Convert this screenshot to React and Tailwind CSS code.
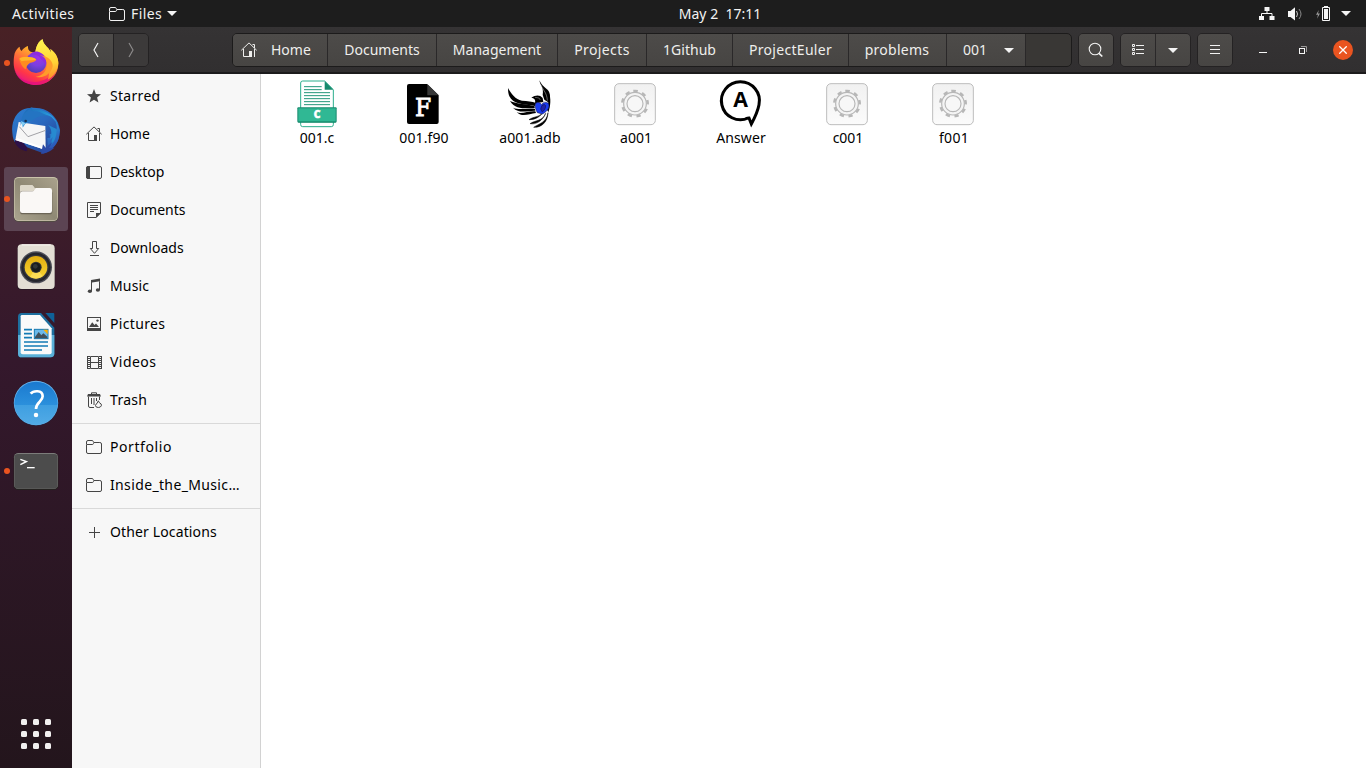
import React from "react";

const DOCK_BOX = "size-12 block overflow-visible";

function Firefox() {
  return (
    <svg className={DOCK_BOX} viewBox="36 117 144 144">
      <defs>
        <linearGradient id="ffBody" x1="0.8" y1="0.05" x2="0.3" y2="1">
          <stop offset="0" stopColor="#fff44f" />
          <stop offset="0.3" stopColor="#ffb52a" />
          <stop offset="0.55" stopColor="#ff7139" />
          <stop offset="0.8" stopColor="#ff3647" />
          <stop offset="1" stopColor="#e31587" />
        </linearGradient>
        <radialGradient id="ffGlobe" cx="0.6" cy="0.25" r="0.8">
          <stop offset="0" stopColor="#a030e8" />
          <stop offset="0.5" stopColor="#7b3fe0" />
          <stop offset="1" stopColor="#4b3cae" />
        </radialGradient>
        <linearGradient id="ffTail" x1="0.5" y1="0" x2="0.6" y2="1">
          <stop offset="0" stopColor="#fff44f" />
          <stop offset="0.6" stopColor="#ffd336" />
          <stop offset="1" stopColor="#ff8a2a" />
        </linearGradient>
      </defs>
      <path d="M44 160 C48 150 53 143 59 140 C59 146 61 150 65 153 C69 146 76 141 84 138 C83 146 86 152 92 155 L106 158 C108 138 116 124 128 118 C129 130 137 137 146 146 C149 150 151 154 153 158 C153 153 152 149 151 147 C165 157 175 171 175 190 C175 228 144 255 108 255 C70 255 41 227 41 189 C41 178 42 169 44 160Z" fill="url(#ffBody)" />
      <path d="M43 207 C53 238 84 250 114 245 C142 240 162 223 171 201 C167 234 140 255 108 255 C75 255 49 235 43 207Z" fill="#e20d82" opacity="0.7" />
      <path d="M106 158 C108 138 116 124 128 118 C129 130 137 137 146 146 C149 150 151 154 153 158 L151 147 C166 158 175 172 175 190 C173 213 161 231 143 239 C151 220 151 187 137 170 C129 161 118 155 106 158Z" fill="url(#ffTail)" />
      <circle cx="108" cy="188" r="31" fill="url(#ffGlobe)" />
      <path d="M88 165 C97 153 112 151 124 160 C137 168 142 183 138 199 C133 182 122 179 119 171 C112 164 99 161 88 165Z" fill="#8d2ce0" />
      <path d="M119 165 C136 168 146 190 138 207 C134 220 121 229 107 230 C130 237 154 222 158 199 C159 184 146 169 119 165Z" fill="#ff9c2b" />
      <path d="M57 176 C67 167 83 171 91 172 C98 172 106 175 109 180 C104 186 96 187 91 188 C84 193 78 199 78 208 C65 201 61 187 57 176Z" fill="#ff8b20" />
      <path d="M58 176 C67 169 82 171 91 172 C99 172 106 175 109 179 C91 181 76 181 65 184Z" fill="#ffb52a" />
    </svg>
  );
}

function Thunderbird() {
  return (
    <svg className={DOCK_BOX} viewBox="36 321 144 144">
      <defs>
        <linearGradient id="tbBody" x1="0" y1="0" x2="0.8" y2="1">
          <stop offset="0" stopColor="#2b7ed0" />
          <stop offset="0.5" stopColor="#2a69bf" />
          <stop offset="1" stopColor="#233f93" />
        </linearGradient>
        <linearGradient id="tbWing" x1="0" y1="0" x2="0.4" y2="1">
          <stop offset="0" stopColor="#1b5fae" />
          <stop offset="0.45" stopColor="#2aa1df" />
          <stop offset="1" stopColor="#2c5bb8" />
        </linearGradient>
      </defs>
      <path d="M66 330 C44 343 34 370 37 398 C38 414 42 424 48 430 L130 460 C159 452 178 426 180 395 C179 359 152 331 119 325 C99 321 79 324 66 330Z" fill="url(#tbBody)" />
      <path d="M50 405 L44 427 C51 441 64 451 79 454 C84 450 83 443 80 440Z" fill="#2d1148" />
      <path d="M56 366 L136 378 L137 446 L130 448 L46 420 Z" fill="#f6f6f6" />
      <path d="M58 380 L84 410 L137 391" fill="none" stroke="#a2a2a7" strokeWidth="3" />
      <path d="M46 420 L130 448 L124 440 L52 414Z" fill="#fff" />
      <path d="M66 375 C62 347 74 327 98 321 C93 328 99 329 107 327 C139 330 164 349 174 371 L167 367 C171 377 171 383 169 390 L162 384 L158 401 L149 402 L150 413 L142 414 L143 435 L130 459 C153 452 169 437 176 416 L180 391 L173 372 L154 350 C133 341 115 343 106 351 C91 365 79 370 66 375Z" fill="url(#tbWing)" />
      <path d="M62 379 C61 355 71 337 94 325 C88 337 101 332 117 335 L151 350 C122 342 106 354 96 362 C87 365 75 363 71 381 L64 368Z" fill="#2474c2" />
      <path d="M63 363 L71 367 L79 371 C71 371 70 377 68 384Z" fill="#83cef3" />
      <circle cx="77" cy="363" r="3.8" fill="#163053" />
      <path d="M144 375 C154 384 158 399 149 420 L158 411 L152 436 C164 425 170 408 170 387" fill="#278ad0" />
      <path d="M129 433 L123 461 C135 462 151 454 163 443 L147 444 L158 425 L137 443Z" fill="#2a49a5" />
    </svg>
  );
}

function FilesApp() {
  return (
    <svg className={DOCK_BOX} viewBox="36 45 144 144">
      <defs>
        <linearGradient id="faBg" x1="1" y1="0" x2="0" y2="1">
          <stop offset="0" stopColor="#aaa28c" />
          <stop offset="0.5" stopColor="#8f8975" />
          <stop offset="1" stopColor="#aaa48e" />
        </linearGradient>
      </defs>
      <rect x="41" y="51" width="134" height="135" rx="15" fill="#514b43" />
      <rect x="42" y="51" width="132" height="132" rx="14" fill="#cac3ab" />
      <rect x="44" y="54" width="128" height="127" rx="12" fill="url(#faBg)" />
      <path d="M60 80 Q60 75 66 75 H93 Q98 75 100 79 L106 86 H150 V98 H60Z" fill="#ddd8ca" />
      <rect x="60" y="92" width="97" height="71" rx="8" fill="#6c6657" />
      <path d="M60 101 Q60 94 67 94 H97 Q102 94 103 89 L107 84 H149 Q156 84 156 91 V152 Q156 159 149 159 H67 Q60 159 60 152Z" fill="#faf8f6" />
      <path d="M60 92 V80 Q60 75 66 75 H93 Q98 75 100 79 L105 86 Q103 93 97 93Z" fill="#ddd8ca" />
    </svg>
  );
}

function Rhythmbox() {
  return (
    <svg className={DOCK_BOX} viewBox="36 249 144 144">
      <defs>
        <linearGradient id="rbCone" x1="0" y1="0" x2="0" y2="1">
          <stop offset="0" stopColor="#e2ad10" />
          <stop offset="1" stopColor="#f7d433" />
        </linearGradient>
      </defs>
      <rect x="52" y="254" width="113" height="135" rx="11" fill="#211a23" opacity="0.7" />
      <rect x="53" y="253" width="111" height="134" rx="12" fill="#e3ded4" />
      <path d="M65 254.5 H152" stroke="#fffdf8" strokeWidth="3" />
      <circle cx="108" cy="322" r="48" fill="#4b4c55" />
      <circle cx="108" cy="322" r="44" fill="#24252c" />
      <circle cx="108" cy="322" r="38" fill="#35363d" />
      <circle cx="108" cy="322" r="34" fill="url(#rbCone)" />
      <path d="M108 322 L90 351 A34 34 0 0 0 128 349Z" fill="#ffe36a" opacity="0.65" />
      <circle cx="108" cy="322" r="17" fill="#363636" />
      <circle cx="108" cy="322" r="14" fill="#171b1d" />
      <circle cx="106" cy="319" r="7" fill="#303638" />
    </svg>
  );
}

function Writer() {
  return (
    <svg className={DOCK_BOX} viewBox="36 3 144 144">
      <path d="M65 9 H123 L163 53 V130 Q163 142 152 142 H65 Q54 142 54 131 V20 Q54 9 65 9Z" fill="#1d6f9f" />
      <path d="M54 75 H163 V130 Q163 142 152 142 H65 Q54 142 54 131Z" fill="#5ab0d8" />
      <path d="M136 9 H160 Q163 9 163 12 V39Z" fill="#0f6198" />
      <path d="M66 15 H120 L155 55 V127 Q155 133 149 133 H68 Q62 133 62 127 V19 Q62 15 66 15Z" fill="#fafafa" />
      <path d="M72 59 H96 M72 71 H96 M72 83 H96 M72 96 H144 M72 108 H144 M72 120 H126" stroke="#147bb5" strokeWidth="5" />
      <rect x="103" y="58" width="41" height="28" fill="#6bb9ea" stroke="#167ab1" strokeWidth="3" />
      <path d="M105 81 L116 66 L124 76 L130 70 L142 80 V85 H105Z" fill="#40505b" />
      <path d="M130 59 H143 V73Z" fill="#ffb000" />
    </svg>
  );
}

function HelpApp() {
  return (
    <svg className={DOCK_BOX} viewBox="36 207 144 144">
      <defs>
        <linearGradient id="helpTop" x1="0" y1="0" x2="0" y2="1">
          <stop offset="0" stopColor="#1a79cf" />
          <stop offset="0.54" stopColor="#2b90dc" />
          <stop offset="0.55" stopColor="#3f9fe1" />
          <stop offset="1" stopColor="#52abe6" />
        </linearGradient>
      </defs>
      <circle cx="108" cy="280" r="67" fill="#17395d" opacity="0.6" />
      <circle cx="108" cy="279" r="66.5" fill="#6cb4eb" />
      <circle cx="108" cy="280" r="65" fill="url(#helpTop)" />
      <path d="M92 251 C99 242 128 238 128 259 C128 275 108 276 108 297" fill="none" stroke="#fff" strokeWidth="8" />
      <circle cx="108" cy="315" r="6.8" fill="#fff" />
    </svg>
  );
}

function TerminalApp() {
  return (
    <svg className={DOCK_BOX} viewBox="36 411 144 144">
      <rect x="41" y="430" width="134" height="110" rx="13" fill="#24211f" />
      <rect x="42" y="429" width="132" height="108" rx="13" fill="#7c7c7a" />
      <rect x="43" y="432" width="130" height="104" rx="11" fill="#4c4c4c" />
      <path d="M61 448 L79 455 L61 464" fill="none" stroke="#fff" strokeWidth="4.5" />
      <path d="M81 473 H104" stroke="#fff" strokeWidth="4" />
    </svg>
  );
}

const DOCK = [
  { id: "firefox", Icon: Firefox, running: true },
  { id: "thunderbird", Icon: Thunderbird },
  { id: "files", Icon: FilesApp, running: true, active: true },
  { id: "rhythmbox", Icon: Rhythmbox },
  { id: "writer", Icon: Writer },
  { id: "help", Icon: HelpApp },
  { id: "terminal", Icon: TerminalApp, running: true },
];

function Dock() {
  return (
    <nav className="flex w-[72px] shrink-0 flex-col items-center justify-between bg-linear-to-b from-[#482125] via-[#34182c] via-45% to-[#23151c] pt-1 pb-[19px]">
      <div className="flex flex-col gap-1">
        {DOCK.map(({ id, Icon, running, active }) => (
          <div
            key={id}
            className={
              "relative flex size-16 items-center justify-center rounded-[3px] " +
              (active ? "bg-[#5c4453]" : "")
            }
          >
            {running && <span className="absolute top-[29px] left-0 size-1.5 rounded-full bg-[#e95420]" />}
            <Icon />
          </div>
        ))}
      </div>
      <div className="grid grid-cols-3 gap-1.5">
        {Array.from({ length: 9 }, (_, i) => (
          <span key={i} className="size-1.5 rounded-[1.5px] bg-[#f2f0f0]" />
        ))}
      </div>
    </nav>
  );
}

function Glyph({ name }) {
  const line = { fill: "none", stroke: "currentColor", strokeWidth: 1 };
  const shapes = {
    star: <path d="M8 1 L9.9 5.9 L15 6.2 L11.1 9.5 L12.4 14.6 L8 11.8 L3.6 14.6 L4.9 9.5 L1 6.2 L6.1 5.9Z" fill="currentColor" />,
    home: (
      <>
        <path d="M0.3 8.3 L8 0.9 L15.7 8.3 M11.5 2.5 H13.5 V6 M2.5 7 V14.5 H8 M13.5 7 V15" {...line} />
        <path d="M8 9 H11 V15 H8Z" fill="currentColor" />
      </>
    ),
    desktop: (
      <>
        <rect x="0.5" y="2.5" width="15" height="12" rx="1.5" {...line} />
        <path d="M1.5 2 H4 V15 H1.5 L0 13.5 V3.5Z" fill="currentColor" />
      </>
    ),
    documents: (
      <>
        <path d="M1.5 0.5 H14.5 V11 L10 15.5 H1.5Z M4 3.5 H12 M4 5.5 H12 M4 7.5 H12 M4 9.5 H8" {...line} />
        <path d="M10 11 H15 L10 16Z" fill="currentColor" />
      </>
    ),
    downloads: <path d="M6.5 1.5 H10.5 V8.5 H12.7 L8.5 13.3 L4.3 8.5 H6.5Z M4 15.5 H13" {...line} />,
    music: (
      <>
        <path d="M5 2 L14 0.5 V3.2 L6 4.4 V13 H5Z M13 2 H14 V12 H13Z" fill="currentColor" />
        <ellipse cx="3.9" cy="13.2" rx="2.1" ry="1.8" fill="currentColor" />
        <ellipse cx="11.9" cy="12" rx="2.1" ry="1.8" fill="currentColor" />
      </>
    ),
    pictures: (
      <>
        <rect x="1.5" y="1.5" width="13" height="13" {...line} />
        <path d="M1 12 H15 V15 H1Z M3 11 L6.2 6.3 L8.5 9 L10 7.6 L13 11Z" fill="currentColor" />
        <circle cx="11.5" cy="4.6" r="1.2" fill="currentColor" />
      </>
    ),
    videos: (
      <>
        <path d="M4.5 2.5 H12.5 V14.5 H4.5Z M4.5 8.5 H12.5" {...line} />
        <path d="M1.5 2 V15 M15.5 2 V15" fill="none" stroke="currentColor" strokeWidth="1" />
        <path d="M3 2 V15 M14 2 V15" fill="none" stroke="currentColor" strokeWidth="2" strokeDasharray="1 1" />
      </>
    ),
    trash: (
      <>
        <path d="M5.5 2.5 V0.8 H10.5 V2.5" {...line} />
        <path d="M2 2 H14 L15 4.5 H1Z" fill="currentColor" />
        <path d="M2.5 4.5 V14 Q2.5 15.5 4 15.5 H8 M13.5 4.5 V8 M5.5 6 V12 M8 6 V13 M10.5 6 V9" {...line} />
        <path d="M12.3 8.8 L13.2 10.5 Q16 11.8 15.4 13.8 Q14.5 15.5 12.3 15.5 Q9.5 15.5 9.5 13.5 Q9.6 12 11 11.5 Z" fill="#f7f7f7" stroke="currentColor" />
      </>
    ),
    folder: (
      <path d="M0.5 5 V3 Q0.5 1.5 2 1.5 H6 Q7 1.5 7.3 2.5 L7.8 3.5 H13.8 Q15.5 3.5 15.5 5 V13 Q15.5 14.5 14 14.5 H2 Q0.5 14.5 0.5 13 V5.5 H6.2 Q7.3 5.5 7.6 4.4 L8 3.5" {...line} />
    ),
    plus: <path d="M3 8.5 H14 M8.5 3 V14" {...line} />,
  };
  return (
    <svg viewBox="0 0 16 16" className="size-4 shrink-0">
      {shapes[name]}
    </svg>
  );
}

const PLACES = [
  [
    ["star", "Starred", "tracking-[0.3px]"],
    ["home", "Home", ""],
    ["desktop", "Desktop", ""],
    ["documents", "Documents", ""],
    ["downloads", "Downloads", "tracking-[0.05px]"],
    ["music", "Music", "tracking-[0.15px]"],
    ["pictures", "Pictures", "tracking-[0.33px]"],
    ["videos", "Videos", "tracking-[0.45px]"],
    ["trash", "Trash", "tracking-[0.3px]"],
  ],
  [
    ["folder", "Portfolio", "tracking-[0.58px]"],
    ["folder", "Inside_the_Music…", "tracking-[0.36px]"],
  ],
  [["plus", "Other Locations", "tracking-[0.13px]"]],
];

function Sidebar() {
  return (
    <aside className="w-[189px] shrink-0 border-r border-[#d2d2d2] bg-[#f7f7f7]">
      {PLACES.map((group, i) => (
        <ul key={i} className={i === 0 ? "pt-[3px] pb-1" : "border-t border-[#d9d9d9] py-1"}>
          {group.map(([icon, label, tracking]) => (
            <li key={label} className="flex h-[38px] items-center gap-2 pl-3.5 text-[#454545]">
              <Glyph name={icon} />
              <span className={"whitespace-nowrap text-black " + tracking}>{label}</span>
            </li>
          ))}
        </ul>
      ))}
    </aside>
  );
}

const FILE_BOX = "size-12 block";

function CFile() {
  return (
    <svg className={FILE_BOX} viewBox="39 30 144 144">
      <path d="M68 33 H134 L160 59 V164 Q160 170 154 170 H68 Q62 170 62 164 V39 Q62 33 68 33Z" fill="#fff" stroke="#2bae8c" strokeWidth="3" />
      <path d="M134 33 L160 59 H134Z" fill="#168a6d" />
      <path d="M72 50 H125 M72 59 H125 M72 68 H150 M72 77 H150 M72 86 H150 M72 95 H150 M72 104 H150" stroke="#22967a" strokeWidth="3" />
      <path d="M52 158 H170 L160 152 H62Z" fill="#168a6d" />
      <rect x="52" y="112" width="118" height="45" rx="3" fill="#168a6d" />
      <rect x="55" y="115" width="112" height="39" fill="#30b894" />
      <text x="111" y="145" textAnchor="middle" fontSize="31" fontWeight="800" fontFamily="Open Sans, sans-serif" fill="#fff" stroke="#fff" strokeWidth="1.5">C</text>
    </svg>
  );
}

function FortranFile() {
  return (
    <svg className={FILE_BOX} viewBox="357 30 144 144">
      <path d="M387 42 H441 L476 76 V156 Q476 162 470 162 H387 Q381 162 381 156 V48 Q381 42 387 42Z" fill="#000" />
      <path d="M442 42 L476 76 H442Z" fill="#383838" />
      <text x="429" y="139" textAnchor="middle" fontSize="70" fontFamily="DejaVu Serif, serif" fill="#fff" stroke="#fff" strokeWidth="2.5">F</text>
    </svg>
  );
}

function AdaFile() {
  return (
    <svg className={FILE_BOX} viewBox="75 30 144 144">
      <path d="M84 54 C94 72 106 88 126 92 C142 93 156 94 168 99 L165 108 C141 102 107 105 93 86 C85 77 84 65 84 54Z" />
      <path d="M90 93 C111 103 140 101 164 109 L164 115 C140 114 107 121 90 93Z" />
      <path d="M99 113 C119 122 140 113 165 117 L166 122 C144 121 118 133 99 113Z" />
      <path d="M110 127 C128 133 145 122 166 124 L168 129 C148 130 129 144 110 127Z" />
      <path d="M154 83 C168 74 180 75 188 84 L190 96 L165 100 C168 88 162 84 154 83Z" />
      <path d="M178 31 C181 48 192 53 188 75 L193 89 L207 98 C213 81 210 62 199 56 C191 49 184 44 178 31Z" />
      <path d="M205 65 C215 83 211 110 205 127 L200 116 C205 102 209 84 205 65Z" />
      <path d="M182 43 C190 63 201 68 202 92" fill="none" stroke="#fff" strokeWidth="1.2" />
      <path d="M189 128 C175 143 163 138 147 149 C163 149 176 144 189 128 M197 130 C188 154 168 149 150 161 C168 164 187 154 197 130 M204 128 C200 158 176 161 161 172 C184 173 203 157 204 128" stroke="#000" strokeWidth="1.5" />
      <path d="M172 128 C162 110 164 97 174 97 Q182 98 185 104 Q191 92 204 99 C212 109 204 124 187 132Z" fill="#1a3cf0" stroke="#101040" strokeWidth="1.5" />
      <path d="M186 106 Q194 100 197 107 C197 116 192 122 187 126 L182 117Z" fill="#2222a8" stroke="#090a39" strokeWidth="1.5" />
      <path d="M165 82 L177 84 L181 90" fill="none" stroke="#aaa" strokeWidth="1.5" />
    </svg>
  );
}

function GearFile() {
  return (
    <svg className={FILE_BOX} viewBox="393 30 144 144">
      <defs>
        <linearGradient id="gearBg" x1="0" y1="0" x2="0" y2="1">
          <stop offset="0" stopColor="#f1f1f1" />
          <stop offset="1" stopColor="#fbfbfb" />
        </linearGradient>
      </defs>
      <rect x="404" y="41" width="122" height="123" rx="13" fill="url(#gearBg)" stroke="#bdbdbd" strokeWidth="3" />
      <circle cx="465" cy="101" r="38" fill="none" stroke="#b7b7b7" strokeWidth="8" strokeDasharray="13 13.53" strokeDashoffset="-6.5" transform="rotate(-107 465 101)" />
      <circle cx="465" cy="101" r="34" fill="#f4f4f4" stroke="#b7b7b7" strokeWidth="3.5" />
      <circle cx="465" cy="101" r="24" fill="#f7f7f7" stroke="#b7b7b7" strokeWidth="3.5" />
    </svg>
  );
}

function AnswerFile() {
  return (
    <svg className={FILE_BOX} viewBox="51 30 144 144">
      <path d="M145 144 A57 57 0 1 1 177 104 C173 126 162 147 154 162 L147 144 Q143 144 137 146" fill="#fff" stroke="#000" strokeWidth="9" />
      <text x="122" y="112" textAnchor="middle" fontSize="64" fontWeight="700" fontFamily="Open Sans, sans-serif" fill="#000">A</text>
    </svg>
  );
}

const FILES = [
  ["001.c", CFile, ""],
  ["001.f90", FortranFile, "pl-0.5 tracking-[0.1px]"],
  ["a001.adb", AdaFile, "pl-0.5 tracking-[0.1px]"],
  ["a001", GearFile, "pl-0.5"],
  ["Answer", AnswerFile, "tracking-[0.1px]"],
  ["c001", GearFile, "pl-0.5"],
  ["f001", GearFile, "pl-0.5 tracking-[0.3px]"],
];

function FileGrid() {
  return (
    <main className="flex grow items-start bg-white pt-1.5 pl-[3px]">
      {FILES.map(([name, Icon, fit]) => (
        <figure key={name} className="flex w-[106px] flex-col items-center">
          <Icon />
          <figcaption className={"leading-5 text-black " + fit}>{name}</figcaption>
        </figure>
      ))}
    </main>
  );
}

function Caret() {
  return (
    <svg viewBox="0 0 10 5" className="h-[5px] w-2.5 shrink-0">
      <path d="M0 0 H10 L5 5Z" fill="#f4f4f4" />
    </svg>
  );
}

const FACE = "bg-linear-to-b from-[#4d4b49] to-[#474543]";
const BTN = "flex items-center justify-center " + FACE;
const GROUP = "flex h-[34px] shrink-0 overflow-hidden rounded-[5px] border border-[#242223]";

const CRUMBS = [
  ["Documents", "w-[109px]"],
  ["Management", "w-[121px]"],
  ["Projects", "w-[89px] tracking-[0.4px]"],
  ["1Github", "w-[86px]"],
  ["ProjectEuler", "w-[116px] tracking-[0.3px]"],
  ["problems", "w-[98px] pr-px tracking-[0.25px]"],
];

function HeaderBar() {
  return (
    <header className="flex h-[47px] shrink-0 items-center border-b-2 border-[#1c1b1c] bg-linear-to-b from-[#353334] to-[#312f30] pt-px pl-1.5 text-[#eeeeec]">
      <div className={GROUP + " w-[71px]"}>
        <div className={BTN + " w-[34px]"}>
          <svg viewBox="0 0 8 16" className="h-4 w-2">
            <path d="M6 1 L2 8 L6 15" fill="none" stroke="#f2f2f2" strokeWidth="1.2" />
          </svg>
        </div>
        <div className="flex grow items-center justify-center border-l border-[#242223] bg-[#3c3a3a]">
          <svg viewBox="0 0 8 16" className="h-4 w-2">
            <path d="M2 1 L6 8 L2 15" fill="none" stroke="#8b8989" strokeWidth="1.2" />
          </svg>
        </div>
      </div>

      <div className="ml-[83px] flex h-[34px] w-[840px] shrink-0 overflow-hidden rounded-[5px] border border-[#1c1b1b] bg-[#393735]">
        <div className={"flex w-[94px] items-center gap-3.5 pl-2 " + FACE}>
          <Glyph name="home" />
          <span>Home</span>
        </div>
        {CRUMBS.map(([label, width]) => (
          <div key={label} className={BTN + " border-l border-[#2a2829] " + width}>
            {label}
          </div>
        ))}
        <div className={BTN + " w-[79px] gap-[17px] border-l border-[#2a2829] pl-[5px]"}>
          <span>001</span>
          <Caret />
        </div>
        <div className="grow border-l border-[#2a2829]" />
      </div>

      <div className={GROUP + " ml-1.5 w-9"}>
        <div className={BTN + " grow"}>
          <svg viewBox="0 0 16 16" className="size-4">
            <circle cx="7" cy="7" r="5.8" fill="none" stroke="#f2f2f2" strokeWidth="1.1" />
            <path d="M11 11.3 L14.3 14.5" stroke="#f2f2f2" strokeWidth="1.7" />
          </svg>
        </div>
      </div>

      <div className={GROUP + " ml-1.5 w-[71px]"}>
        <div className={BTN + " w-[34px]"}>
          <svg viewBox="0 0 16 16" className="size-4">
            <path d="M2.5 2.5 H4.5 V4.5 H2.5Z M2.5 6.5 H4.5 V8.5 H2.5Z M2.5 10.5 H4.5 V12.5 H2.5Z M6 3.5 H14 M6 7.5 H14 M6 11.5 H14" fill="none" stroke="#f2f2f2" />
          </svg>
        </div>
        <div className={BTN + " grow border-l border-[#2a2829]"}>
          <Caret />
        </div>
      </div>

      <div className={GROUP + " ml-1.5 w-9"}>
        <div className={BTN + " grow"}>
          <svg viewBox="0 0 16 16" className="size-4">
            <path d="M3 3.5 H13 M3 7.5 H13 M3 11.5 H13" stroke="#f2f2f2" />
          </svg>
        </div>
      </div>

      <div className="ml-[22px] flex items-center">
        <svg viewBox="0 0 16 16" className="size-4">
          <path d="M4 10.5 H12" stroke="#f6f6f6" />
        </svg>
        <svg viewBox="0 0 16 16" className="ml-6 size-4">
          <path d="M6 4.5 H11.5 V10" fill="none" stroke="#9b9999" />
          <rect x="4.5" y="6.5" width="5" height="5" fill="none" stroke="#f6f6f6" />
        </svg>
        <div className="ml-[22px] flex size-5 items-center justify-center rounded-full bg-[#e95420]">
          <svg viewBox="0 0 8 8" className="size-2">
            <path d="M0.3 0.3 L7.7 7.7 M7.7 0.3 L0.3 7.7" stroke="#fff" strokeWidth="1.3" />
          </svg>
        </div>
      </div>
    </header>
  );
}

function TopBar() {
  return (
    <div className="grid h-[27px] shrink-0 grid-cols-[1fr_auto_1fr] items-center bg-[#1d1d1d] tracking-[0.4px] text-[#f2f2f2]">
      <div className="flex items-center pl-3">
        <span className="w-[97px]">Activities</span>
        <Glyph name="folder" />
        <span className="mr-[5px] ml-1.5">Files</span>
        <Caret />
      </div>
      <div className="pl-[74px] whitespace-pre tracking-normal">May 2  17:11</div>
      <div className="flex items-center justify-end pr-[15px]">
        <svg viewBox="0 0 16 16" className="size-4">
          <path d="M5.5 1 H10.5 V5 H5.5Z M0 10 H5 V14 H0Z M10.5 10 H15.5 V14 H10.5Z" fill="#f6f6f6" />
          <path d="M8 4 V7.5 M2.5 11 V7.5 H13 V11" fill="none" stroke="#f6f6f6" />
        </svg>
        <svg viewBox="0 0 16 16" className="ml-[13px] size-4">
          <path d="M0 5 H2.5 L7 1.2 V14.5 L2.5 11 H0Z" fill="#f6f6f6" />
          <path d="M8.5 5 Q10.5 8 8.5 11" fill="none" stroke="#c8c8c8" />
          <path d="M11 3 Q15 8 11 13" fill="none" stroke="#8a8a8a" />
        </svg>
        <svg viewBox="0 0 16 16" className="ml-[11px] size-4">
          <path d="M3.8 4 L1 8.8 H3 L2 12.8 L5 7.5 H3Z" fill="#9a9a9a" />
          <path d="M7.5 1.5 H14.5 V14.5 H7.5Z" fill="none" stroke="#f6f6f6" />
          <path d="M9 3 H13 V13 H9Z M9 0 H13 V1 H9Z" fill="#f6f6f6" />
        </svg>
        <span className="ml-2.5">
          <Caret />
        </span>
      </div>
    </div>
  );
}

export default function App() {
  return (
    <div className="flex h-[768px] w-[1366px] flex-col overflow-hidden bg-white font-['Noto_Sans','Open_Sans',sans-serif] text-[14px] leading-5">
      <TopBar />
      <div className="flex min-h-0 grow">
        <Dock />
        <div className="flex min-w-0 grow flex-col">
          <HeaderBar />
          <div className="flex min-h-0 grow">
            <Sidebar />
            <FileGrid />
          </div>
        </div>
      </div>
    </div>
  );
}
